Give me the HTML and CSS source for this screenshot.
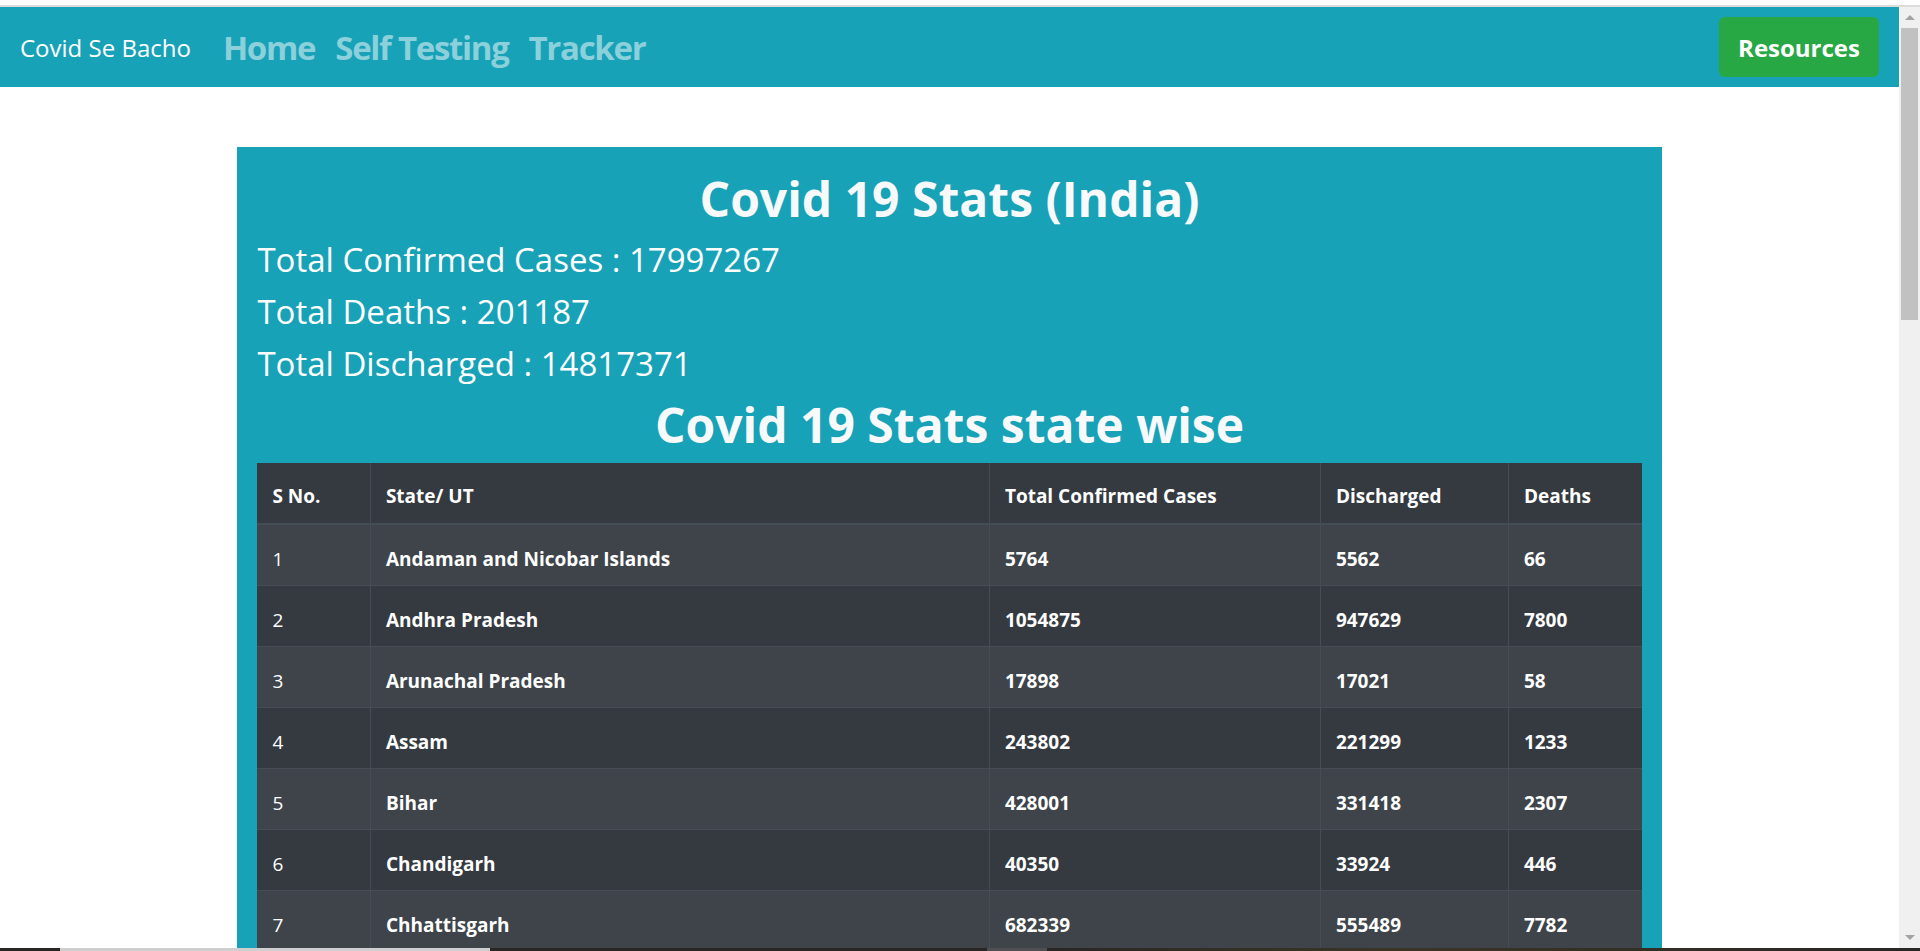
FILE: index.html
```html
<!DOCTYPE html>
<html lang="en">
<head>
<meta charset="utf-8">
<title>Covid Se Bacho - Tracker</title>
<link rel="stylesheet" href="styles.css">
</head>
<body>
<div class="screen">
  <div class="topstrip"></div>
  <div class="viewport">
    <div class="page">
      <nav class="navbar">
        <a class="brand" href="#">Covid Se Bacho</a>
        <ul class="nav">
          <li><a class="nav-link" href="#">Home</a></li>
          <li><a class="nav-link" href="#">Self Testing</a></li>
          <li><a class="nav-link" href="#">Tracker</a></li>
        </ul>
        <a class="btn-resources" href="#">Resources</a>
      </nav>

      <main class="stats">
        <h1 class="stats-title">Covid 19 Stats (India)</h1>
        <h3 class="stat-line">Total Confirmed Cases : 17997267</h3>
        <h3 class="stat-line">Total Deaths : 201187</h3>
        <h3 class="stat-line">Total Discharged : 14817371</h3>
        <h1 class="stats-title">Covid 19 Stats state wise</h1>
        <table class="state-table">
          <colgroup>
            <col class="col-sno">
            <col class="col-state">
            <col class="col-conf">
            <col class="col-dis">
            <col class="col-death">
          </colgroup>
          <thead>
            <tr><th>S No.</th><th>State/ UT</th><th>Total Confirmed Cases</th><th>Discharged</th><th>Deaths</th></tr>
          </thead>
          <tbody>
            <tr><td class="num">1</td><td>Andaman and Nicobar Islands</td><td>5764</td><td>5562</td><td>66</td></tr>
            <tr><td class="num">2</td><td>Andhra Pradesh</td><td>1054875</td><td>947629</td><td>7800</td></tr>
            <tr><td class="num">3</td><td>Arunachal Pradesh</td><td>17898</td><td>17021</td><td>58</td></tr>
            <tr><td class="num">4</td><td>Assam</td><td>243802</td><td>221299</td><td>1233</td></tr>
            <tr><td class="num">5</td><td>Bihar</td><td>428001</td><td>331418</td><td>2307</td></tr>
            <tr><td class="num">6</td><td>Chandigarh</td><td>40350</td><td>33924</td><td>446</td></tr>
            <tr><td class="num">7</td><td>Chhattisgarh</td><td>682339</td><td>555489</td><td>7782</td></tr>
          </tbody>
        </table>
      </main>
    </div>
    <div class="scrollbar">
      <div class="sb-btn"><span class="sb-arrow-up"></span></div>
      <div class="sb-thumb"></div>
      <div class="sb-track"></div>
      <div class="sb-btn"><span class="sb-arrow-down"></span></div>
    </div>
  </div>
  <div class="taskbar">
    <span class="tb-seg tb-a"></span>
    <span class="tb-seg tb-b"></span>
    <span class="tb-seg tb-c"></span>
    <span class="tb-seg tb-d"></span>
    <span class="tb-seg tb-e"></span>
  </div>
</div>
</body>
</html>
```

FILE: styles.css
```css
* { box-sizing: border-box; }

html, body {
  margin: 0;
  padding: 0;
  height: 951px;
  overflow: hidden;
  background: #ffffff;
  font-family: "Open Sans", "Noto Sans", "Liberation Sans", sans-serif;
}

.screen {
  display: flex;
  flex-direction: column;
  height: 951px;
}

.topstrip {
  height: 7px;
  flex: none;
  background: #dcdcdc;
  border-top: 5px solid #ffffff;
}

.viewport {
  flex: 1;
  display: flex;
  min-height: 0;
}

.page {
  flex: 1;
  overflow: hidden;
  background: #ffffff;
}

/* navbar */
.navbar {
  height: 80px;
  background: #17a2b8;
  display: flex;
  align-items: center;
  padding: 0 20px;
}

.brand {
  color: #ffffff;
  text-decoration: none;
  font-size: 24px;
  margin-right: 22px;
  white-space: nowrap;
}

.nav {
  list-style: none;
  margin: 0;
  padding: 0;
  display: flex;
}

.nav-link {
  display: block;
  padding: 0 10px;
  font-size: 33px;
  font-weight: 700;
  color: #8bd0db;
  text-decoration: none;
  letter-spacing: -1.3px;
}

.btn-resources {
  margin-left: auto;
  width: 160px;
  height: 60px;
  border-radius: 6px;
  background: #28a745;
  color: #ffffff;
  font-size: 24px;
  font-weight: 700;
  text-decoration: none;
  display: flex;
  align-items: center;
  justify-content: center;
}

/* stats box */
.stats {
  width: 75%;
  margin: 60px auto 0;
  background: #17a2b8;
  padding: 20px;
}

.stats-title {
  margin: 0 0 10px;
  padding-top: 3px;
  font-size: 48px;
  line-height: 57px;
  font-weight: 700;
  text-align: center;
  color: #f8f9fa;
}

.stat-line {
  margin: 0 0 10px;
  padding-top: 3px;
  font-size: 33px;
  line-height: 39px;
  font-weight: 500;
  color: #ffffff;
}

/* table */
.state-table {
  width: 100%;
  border-collapse: collapse;
  border-style: hidden;
  table-layout: fixed;
  background: #343a40;
  color: #ffffff;
  font-size: 19px;
  line-height: 30px;
}

.col-sno { width: 113px; }
.col-state { width: 619px; }
.col-conf { width: 331px; }
.col-dis { width: 188px; }

.state-table th,
.state-table td {
  border: 1px solid #454d55;
  text-align: left;
  vertical-align: top;
  font-weight: 700;
  white-space: nowrap;
}

.state-table th { padding: 18px 15px 12px; }
.state-table td { padding: 19px 15px 11px; }

.state-table thead th { border-bottom-width: 2px; }

.state-table td.num { font-weight: 400; }

.state-table tbody tr:nth-child(odd) { background: #3e444a; }

/* scrollbar */
.scrollbar {
  width: 21px;
  flex: none;
  background: #f0f0f0;
  display: flex;
  flex-direction: column;
}

.sb-btn {
  height: 21px;
  flex: none;
  display: flex;
  align-items: center;
  justify-content: center;
}

.sb-arrow-up {
  width: 0;
  height: 0;
  border-left: 5px solid transparent;
  border-right: 5px solid transparent;
  border-bottom: 5px solid #a3a3a3;
}

.sb-arrow-down {
  width: 0;
  height: 0;
  border-left: 5px solid transparent;
  border-right: 5px solid transparent;
  border-top: 5px solid #a3a3a3;
}

.sb-thumb {
  height: 292px;
  flex: none;
  margin: 0 2px 0 2px;
  background: #c1c1c1;
}

.sb-track { flex: 1; }

/* taskbar strip */
.taskbar {
  height: 3px;
  flex: none;
  display: flex;
  background: #2a2624;
}

.tb-seg { display: block; height: 3px; }
.tb-a { width: 60px; background: #2a2624; }
.tb-b { width: 430px; background: #cfcfcf; }
.tb-c { width: 497px; background: #2a2624; }
.tb-d { width: 60px; background: #4f4f4f; }
.tb-e { flex: 1; background: linear-gradient(90deg, #2a2624, #3b3528 40%, #2a2624); }
```
